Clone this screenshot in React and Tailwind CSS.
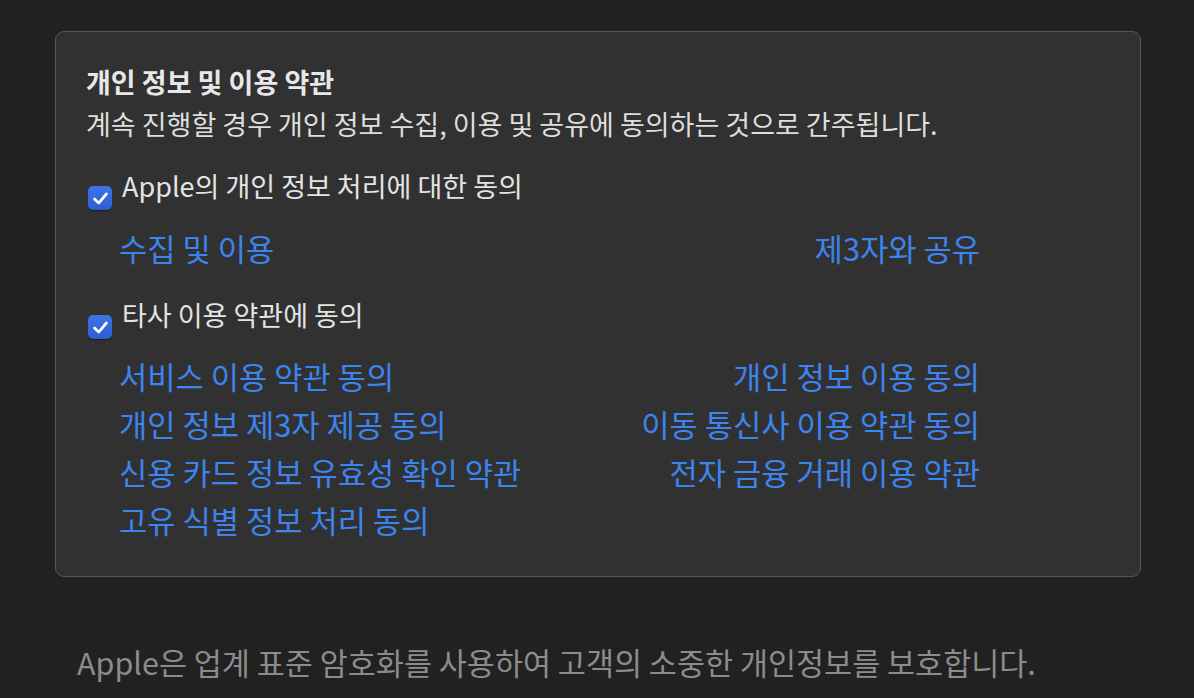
import React from "react";

const font = { fontFamily: '"Noto Sans CJK KR", "Noto Sans", sans-serif' };

function Check() {
  return (
    <div className="w-[24px] h-[24px] rounded-[5px] bg-gradient-to-b from-[#3e74e6] to-[#2c5ed0] flex items-center justify-center shrink-0 shadow-[0_1px_1px_rgba(0,0,0,0.45)]">
      <svg width="19" height="19" viewBox="0 0 16 16" fill="none">
        <path d="M3 8.4 L6.5 11.9 L13 4.2" stroke="white" strokeWidth="2.3" strokeLinecap="round" strokeLinejoin="round" />
      </svg>
    </div>
  );
}

export default function App() {
  const left2 = ["서비스 이용 약관 동의", "개인 정보 제3자 제공 동의", "신용 카드 정보 유효성 확인 약관", "고유 식별 정보 처리 동의"];
  const right2 = ["개인 정보 이용 동의", "이동 통신사 이용 약관 동의", "전자 금융 거래 이용 약관"];
  return (
    <div className="w-[1194px] h-[698px] bg-[#212121] overflow-hidden" style={font}>
      <div className="pt-[31px] px-[55px]">
        <div className="w-[1086px] h-[546px] rounded-[9px] border border-[#555555] bg-[#313131] pl-[30px] pt-[32px]">
          <div className="text-[27px] leading-[36px] font-bold text-[#e8e8e8]">개인 정보 및 이용 약관</div>
          <div className="text-[27px] leading-[36px] text-[#dedede] mt-[6px]">계속 진행할 경우 개인 정보 수집, 이용 및 공유에 동의하는 것으로 간주됩니다.</div>

          <div className="flex items-start gap-[10px] mt-[26px] ml-[2px]">
            <div className="mt-[18px]"><Check /></div>
            <div className="text-[27px] leading-[36px] text-[#e4e4e4]">Apple의 개인 정보 처리에 대한 동의</div>
          </div>
          <div className="ml-[33px] w-[861px] flex justify-between mt-[18px] text-[30.75px] leading-[40px] text-[#3c84ee]">
            <span>수집 및 이용</span>
            <span>제3자와 공유</span>
          </div>

          <div className="flex items-start gap-[10px] mt-[29px] ml-[2px]">
            <div className="mt-[18px]"><Check /></div>
            <div className="text-[27px] leading-[36px] text-[#e4e4e4]">타사 이용 약관에 동의</div>
          </div>
          <div className="ml-[33px] w-[861px] grid grid-cols-2 mt-[13px] text-[30.75px] leading-[48px] text-[#3c84ee]">
            <div className="flex flex-col">
              {left2.map((t) => (
                <span key={t}>{t}</span>
              ))}
            </div>
            <div className="flex flex-col items-end">
              {right2.map((t) => (
                <span key={t}>{t}</span>
              ))}
            </div>
          </div>
        </div>
      </div>
      <div className="pl-[77px] mt-[65px] text-[30.5px] leading-[40px] text-[#8c8c8c]">
        Apple은 업계 표준 암호화를 사용하여 고객의 소중한 개인정보를 보호합니다.
      </div>
    </div>
  );
}
